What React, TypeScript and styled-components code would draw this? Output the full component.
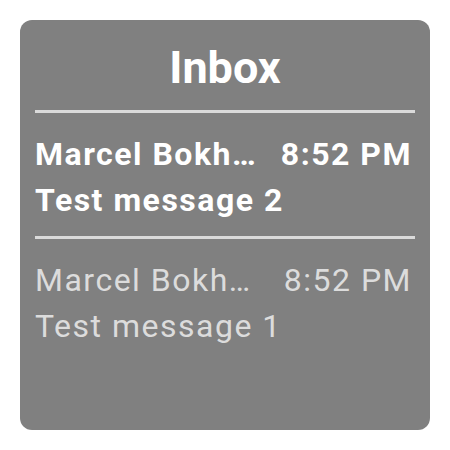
import React from "react";
import styled, { createGlobalStyle } from "styled-components";

const Global = createGlobalStyle`
  html, body { margin: 0; padding: 0; background: #ffffff; }
  body { font-family: Roboto, "Liberation Sans", sans-serif; }
`;

const Page = styled.div`
  padding: 20px;
  width: 410px;
`;

const Card = styled.div`
  box-sizing: border-box;
  width: 410px;
  height: 410px;
  background: #808080;
  border-radius: 12px;
  padding: 0 15px;
  display: flex;
  flex-direction: column;
`;

const Title = styled.h1`
  margin: 0;
  padding: 20px 0 14px;
  text-align: center;
  color: #ffffff;
  font-size: 45px;
  font-weight: 700;
  line-height: 56px;
`;

const Divider = styled.div`
  height: 3px;
  background: #dadada;
`;

const Item = styled.div<{ $unread: boolean }>`
  display: flex;
  flex-direction: column;
  padding: 18px 3px 13px 0;
  color: ${(p) => (p.$unread ? "#ffffff" : "#dcdcdc")};
  font-weight: ${(p) => (p.$unread ? 700 : 400)};
  font-size: 32px;
  letter-spacing: 1.5px;
  line-height: 46px;
`;

const Row = styled.div`
  display: flex;
  align-items: baseline;
  gap: 18px;
`;

const Sender = styled.span`
  flex: 1;
  min-width: 0;
  white-space: nowrap;
  overflow: hidden;
  text-overflow: ellipsis;
`;

const Time = styled.span`
  white-space: nowrap;
`;

const Subject = styled.div`
  white-space: nowrap;
  overflow: hidden;
  text-overflow: ellipsis;
`;

const messages = [
  { sender: "Marcel Bokhorst", time: "8:52 PM", subject: "Test message 2", unread: true },
  { sender: "Marcel Bokhorst", time: "8:52 PM", subject: "Test message 1", unread: false },
];

export default function App() {
  return (
    <>
      <Global />
      <Page>
        <Card>
          <Title>Inbox</Title>
          {messages.map((m, i) => (
            <React.Fragment key={i}>
              <Divider />
              <Item $unread={m.unread}>
                <Row>
                  <Sender>{m.sender}</Sender>
                  <Time>{m.time}</Time>
                </Row>
                <Subject>{m.subject}</Subject>
              </Item>
            </React.Fragment>
          ))}
        </Card>
      </Page>
    </>
  );
}
